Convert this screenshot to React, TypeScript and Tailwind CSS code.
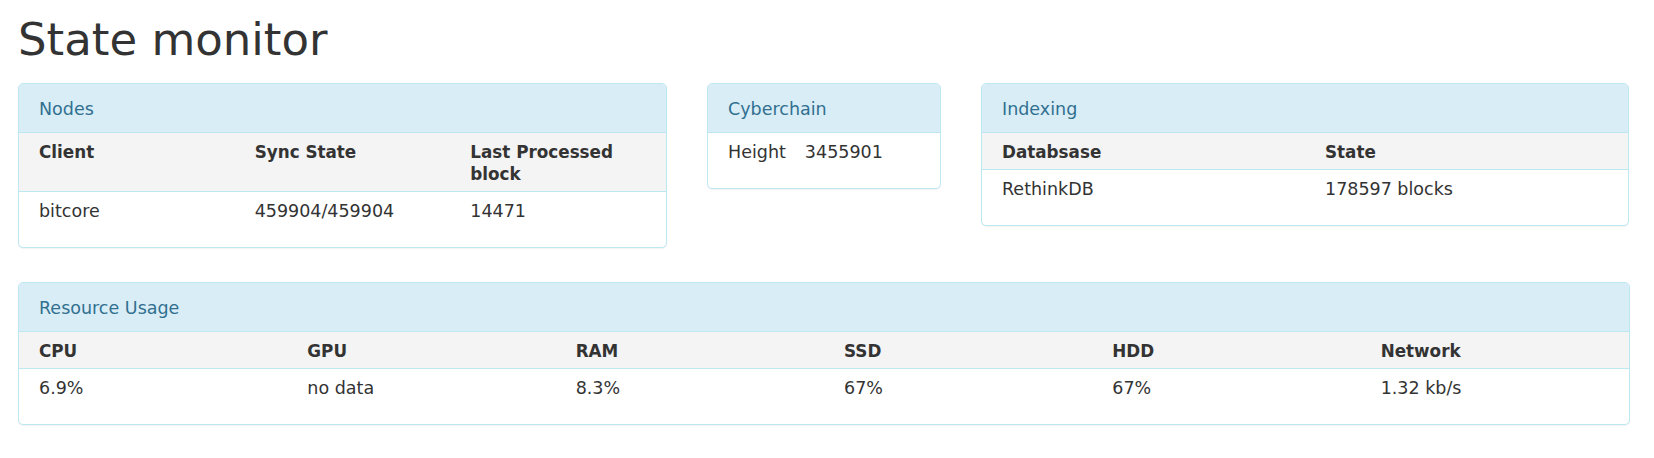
import React from 'react';

type PanelProps = {
  title: string;
  className?: string;
  children: React.ReactNode;
};

const Panel: React.FC<PanelProps> = ({ title, className = '', children }) => (
  <div className={`rounded-[5px] border border-[#bce8f1] bg-white shadow-[0_1px_1px_rgba(0,0,0,0.05)] ${className}`}>
    <div className="flex h-[49px] items-center rounded-t-[4px] border-b border-[#bce8f1] bg-[#d9edf7] px-[20px] pt-[3px] text-[17.5px] text-[#31708f]">
      {title}
    </div>
    <div className="pb-[19px]">{children}</div>
  </div>
);

const HeadRow: React.FC<{ cells: React.ReactNode[]; cols: string }> = ({ cells, cols }) => (
  <div className={`grid ${cols} border-b border-[#bce8f1] bg-[#f4f4f4]`}>
    {cells.map((c, i) => (
      <div key={i} className="px-[20px] pt-[8px] pb-[6px] text-[16.8px] font-bold leading-[22px]">
        {c}
      </div>
    ))}
  </div>
);

const BodyRow: React.FC<{ cells: React.ReactNode[]; cols: string }> = ({ cells, cols }) => (
  <div className={`grid ${cols}`}>
    {cells.map((c, i) => (
      <div key={i} className="px-[20px] pt-[8px] pb-[6px] leading-[22px]">
        {c}
      </div>
    ))}
  </div>
);

export default function App() {
  return (
    <div className="min-h-[458px] bg-white pl-[18px] pt-[17px] text-[17.5px] text-[#333] font-['DejaVu_Sans',sans-serif]">
      <h1 className="text-[45px] leading-none text-[#333]">State monitor</h1>

      <div className="mt-[21px] flex items-start gap-[40px]">
        <Panel title="Nodes" className="w-[649px]">
          <HeadRow
            cols="grid-cols-3"
            cells={['Client', 'Sync State', <>Last Processed<br />block</>]}
          />
          <BodyRow cols="grid-cols-3" cells={['bitcore', '459904/459904', '14471']} />
        </Panel>

        <Panel title="Cyberchain" className="w-[234px]">
          <div className="flex gap-[19px] px-[20px] pt-[8px] pb-[6px] leading-[22px]">
            <span>Height</span>
            <span>3455901</span>
          </div>
        </Panel>

        <Panel title="Indexing" className="w-[648px]">
          <HeadRow cols="grid-cols-2" cells={['Databsase', 'State']} />
          <BodyRow cols="grid-cols-2" cells={['RethinkDB', '178597 blocks']} />
        </Panel>
      </div>

      <Panel title="Resource Usage" className="mt-[34px] w-[1612px]">
        <HeadRow cols="grid-cols-6" cells={['CPU', 'GPU', 'RAM', 'SSD', 'HDD', 'Network']} />
        <BodyRow cols="grid-cols-6" cells={['6.9%', 'no data', '8.3%', '67%', '67%', '1.32 kb/s']} />
      </Panel>
    </div>
  );
}
